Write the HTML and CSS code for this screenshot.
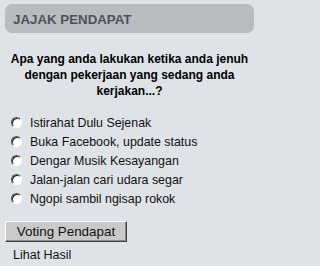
FILE: index.html
```html
<!DOCTYPE html>
<html>
<head>
<meta charset="utf-8">
<link rel="stylesheet" href="styles.css">
</head>
<body>
<div class="poll">
  <div class="poll-head">JAJAK PENDAPAT</div>
  <p class="question">Apa yang anda lakukan ketika anda jenuh dengan pekerjaan yang sedang anda kerjakan...?</p>
  <ul class="options">
    <li><span class="radio"></span><span>Istirahat Dulu Sejenak</span></li>
    <li><span class="radio"></span><span>Buka Facebook, update status</span></li>
    <li><span class="radio"></span><span>Dengar Musik Kesayangan</span></li>
    <li><span class="radio"></span><span>Jalan-jalan cari udara segar</span></li>
    <li><span class="radio"></span><span>Ngopi sambil ngisap rokok</span></li>
  </ul>
  <button class="vote">Voting Pendapat</button>
  <div class="results">Lihat Hasil</div>
</div>
</body>
</html>
```
FILE: styles.css
```css
html, body {
  margin: 0;
  padding: 0;
  background: #dfe2e6;
}
.poll {
  width: 261px;
  height: 266px;
  padding: 4px 7px 0 5px;
  box-sizing: border-box;
  font-family: "Liberation Sans", Arial, sans-serif;
  color: #111;
}
.poll-head {
  height: 29px;
  line-height: 31px;
  background: #b8bcc1;
  border-radius: 7px;
  padding-left: 8px;
  font-weight: bold;
  font-size: 13.3px;
  color: #4f5358;
}
.question {
  margin: 18px 0 0 0;
  text-align: center;
  font-weight: bold;
  font-size: 12px;
  line-height: 16px;
  color: #000;
}
.options {
  list-style: none;
  margin: 14px 0 0 0;
  padding: 0 0 0 6px;
}
.options li {
  display: flex;
  align-items: center;
  height: 19px;
  font-size: 12.4px;
  color: #111;
}
.radio {
  width: 9px;
  height: 9px;
  border-radius: 50%;
  background: #fff;
  border: 1px solid;
  border-color: #555 #fff #fff #555;
  box-shadow: inset 1px 1px 0 #222;
  margin-right: 8px;
  flex: none;
}
.vote {
  display: block;
  margin: 13px 0 0 0;
  width: 122px;
  height: 21px;
  padding: 0;
  font-family: "Liberation Sans", Arial, sans-serif;
  font-size: 13.4px;
  color: #111;
  background: #c9c9c9;
  border: 1px solid;
  border-color: #fff #404040 #404040 #fff;
  box-shadow: inset -1px -1px 0 #888;
}
.results {
  margin: 6px 0 0 8px;
  font-size: 12.5px;
  color: #111;
}
```
